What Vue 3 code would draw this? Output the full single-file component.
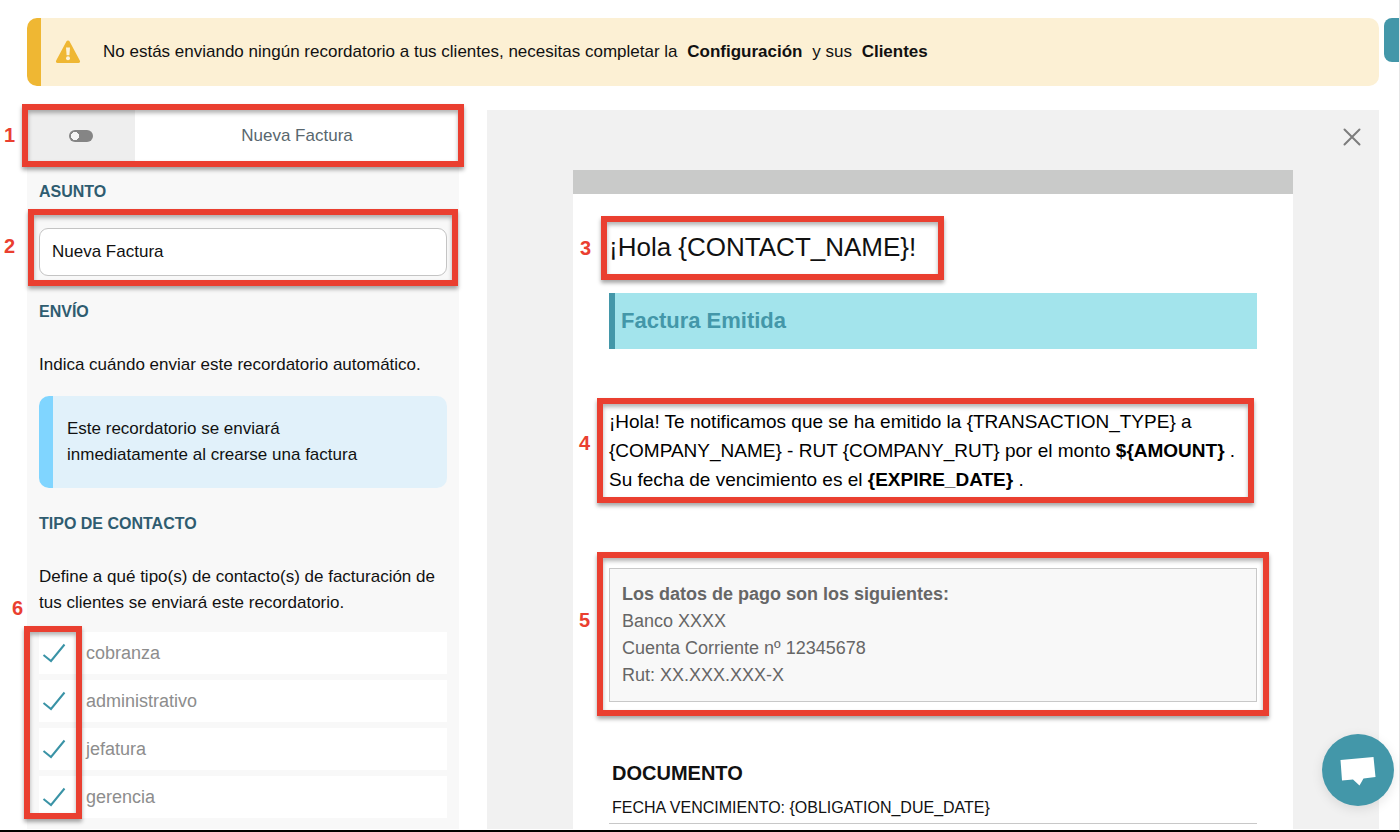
<script setup>
import { ref } from 'vue'

const subject = ref('Nueva Factura')
const enabled = ref(false)
const contacts = ref([
  { name: 'cobranza', checked: true },
  { name: 'administrativo', checked: true },
  { name: 'jefatura', checked: true },
  { name: 'gerencia', checked: true },
])
</script>

<template>
  <div class="page">
    <div class="alert" role="alert">
      <svg class="alert-icon" viewBox="0 0 26 24" aria-hidden="true">
        <path d="M11.500 1.300a1.700 1.700 0 0 1 3 0l10.300 19.300c.7 1.300 0 2.400-1.400 2.400H2.600c-1.400 0-2.100-1.100-1.400-2.400z" fill="#efb733" />
        <path d="M11 7.500h4l-.6 7.700h-2.800z" fill="#fdf3da" />
        <circle cx="13" cy="18.300" r="2" fill="#fdf3da" />
      </svg>
      <p>
        No estás enviando ningún recordatorio a tus clientes, necesitas completar la
        <a href="#configuracion">Configuración</a> y sus <a href="#clientes">Clientes</a>
      </p>
    </div>
    <button class="side-tab" type="button" aria-label="Abrir panel"></button>

    <div class="columns">
      <section class="settings">
        <header class="reminder">
          <label class="switch">
            <input v-model="enabled" type="checkbox" aria-label="Activar recordatorio" />
          </label>
          <span class="reminder-name">Nueva Factura</span>
          <span class="mark mark-header"><b>1</b></span>
        </header>

        <div class="fields">
          <h2><label for="subject">ASUNTO</label></h2>
          <div class="subject">
            <input id="subject" v-model="subject" type="text" />
            <span class="mark mark-subject"><b>2</b></span>
          </div>

          <h2>ENVÍO</h2>
          <p class="help">Indica cuándo enviar este recordatorio automático.</p>
          <div class="info">Este recordatorio se enviará<br />inmediatamente al crearse una factura</div>

          <h2>TIPO DE CONTACTO</h2>
          <p class="help">Define a qué tipo(s) de contacto(s) de facturación de tus clientes se enviará este recordatorio.</p>
          <div class="contacts">
            <label v-for="c in contacts" :key="c.name" class="contact">
              <input v-model="c.checked" type="checkbox" />
              <svg viewBox="0 0 24 20" aria-hidden="true">
                <path d="M1.500 12l7.500 6L22.500 1.500" fill="none" stroke="#3a93a6" stroke-width="2" />
              </svg>
              <span>{{ c.name }}</span>
            </label>
            <span class="mark mark-contacts"><b>6</b></span>
          </div>
        </div>
      </section>

      <section class="preview">
        <button class="close" type="button" aria-label="Cerrar">
          <svg viewBox="0 0 18 18" aria-hidden="true">
            <path d="M1.500 1.500l15 15M16.500 1.500l-15 15" stroke="#7d7d7d" stroke-width="2" stroke-linecap="round" />
          </svg>
        </button>
        <article class="mail">
          <h1>¡Hola {CONTACT_NAME}!<span class="mark mark-title"><b>3</b></span></h1>
          <div class="status">Factura Emitida</div>
          <div class="body">
            ¡Hola! Te notificamos que se ha emitido la {TRANSACTION_TYPE} a<br />
            {COMPANY_NAME} - RUT {COMPANY_RUT} por el monto <strong>${AMOUNT}</strong> .<br />
            Su fecha de vencimiento es el <strong>{EXPIRE_DATE}</strong> .
            <span class="mark mark-body"><b>4</b></span>
          </div>
          <div class="payment">
            <strong>Los datos de pago son los siguientes:</strong><br />
            Banco XXXX<br />
            Cuenta Corriente nº 12345678<br />
            Rut: XX.XXX.XXX-X
            <span class="mark mark-payment"><b>5</b></span>
          </div>
          <div class="document">
            <h3>DOCUMENTO</h3>
            <p>FECHA VENCIMIENTO: {OBLIGATION_DUE_DATE}</p>
          </div>
        </article>
      </section>
    </div>

    <button class="chat" type="button" aria-label="Abrir chat">
      <svg viewBox="0 0 36 32" aria-hidden="true">
        <path d="M.5 6L33.500 3l2 20-12 1.500L19.500 31.500 13 25.500 2 26.500z" fill="#fff" />
      </svg>
    </button>
  </div>
</template>

<style>
body {
  margin: 0;
  background: #fff;
}
</style>

<style scoped>
.page {
  position: relative;
  box-sizing: border-box;
  min-height: 100vh;
  padding: 18px 20px 1px 27px;
  border-right: 1px solid #e6e6e6;
  border-bottom: 2px solid #000;
  display: flex;
  flex-direction: column;
  gap: 24px;
  overflow: hidden;
  color: #111;
  font: 17px/26px "Liberation Sans", Arial, sans-serif;
}
h1, h2, h3, p {
  margin: 0;
}
button {
  padding: 0;
  border: 0;
  background: none;
  cursor: pointer;
}
svg {
  display: block;
}
.alert {
  display: flex;
  align-items: center;
  gap: 22px;
  min-height: 68px;
  padding-left: 14px;
  border-left: 14px solid #efb733;
  border-radius: 10px;
  background: #fcf0d4;
}
.alert-icon {
  width: 26px;
  height: 24px;
}
.alert a {
  margin: 0 5px;
  color: inherit;
  font-weight: bold;
  text-decoration: none;
}
.side-tab {
  position: absolute;
  top: 18px;
  right: -29px;
  width: 44px;
  height: 44px;
  border-radius: 8px;
  background: #4397a9;
}
.columns {
  flex: 1;
  display: grid;
  grid-template-columns: 432px 1fr;
  gap: 28px;
}
.settings {
  background: #f8f8f8;
}
.reminder {
  position: relative;
  display: grid;
  grid-template-columns: 1fr 3fr;
  height: 52px;
  background: #fff;
}
.switch {
  display: grid;
  place-items: center;
  background: #eee;
}
.switch input {
  appearance: none;
  box-sizing: border-box;
  width: 24px;
  height: 12px;
  margin: 0;
  border-radius: 6px;
  background: radial-gradient(circle at 6px 6px, #f4f4f4 4px, #858585 4px);
}
.switch input:checked {
  background: radial-gradient(circle at 18px 6px, #f4f4f4 4px, #3a93a6 4px);
}
.reminder-name {
  place-self: center;
  color: #59676e;
}
.fields {
  padding: 18px 12px 10px;
}
.fields h2 {
  margin-bottom: 28px;
  color: #2f5c70;
  font-size: 16px;
  line-height: 24px;
}
.fields h2:first-child {
  margin-bottom: 24px;
}
.subject {
  position: relative;
  margin-bottom: 24px;
}
.subject input {
  display: block;
  box-sizing: border-box;
  width: 100%;
  height: 48px;
  padding: 0 12px;
  border: 1px solid #c4c4c4;
  border-radius: 9px;
  background: #fff;
  color: #111;
  font: inherit;
}
.help {
  margin-bottom: 16px;
}
.info {
  margin: 18px 0 24px;
  padding: 20px 14px;
  border-left: 14px solid #80d5ff;
  border-radius: 10px;
  background: #e1f1fa;
}
.contacts {
  position: relative;
  display: grid;
  gap: 6px;
}
.contact {
  display: flex;
  align-items: center;
  height: 42px;
  padding-left: 3px;
  background: #fff;
  color: #8d8d8d;
  font-size: 18px;
}
.contact input {
  appearance: none;
  width: 0;
  height: 0;
  margin: 0;
}
.contact svg {
  width: 24px;
  height: 20px;
  margin-right: 20px;
  visibility: hidden;
}
.contact input:checked + svg {
  visibility: visible;
}
.preview {
  position: relative;
  padding: 60px 24px 0;
  background: #f1f1f1;
}
.close {
  position: absolute;
  top: 18px;
  right: 18px;
}
.close svg {
  width: 18px;
  height: 18px;
}
.mail {
  box-sizing: border-box;
  max-width: 720px;
  min-height: 100%;
  margin: 0 auto;
  padding: 36px 36px 0;
  border-top: 24px solid #c9cac9;
  background: #fff;
}
.mail h1 {
  position: relative;
  width: fit-content;
  margin-bottom: 29px;
  font-size: 26px;
  font-weight: normal;
  line-height: 34px;
}
.status {
  padding-left: 6px;
  border-left: 6px solid #4397a9;
  background: #a3e4ec;
  color: #4397a9;
  font-size: 22px;
  font-weight: bold;
  line-height: 56px;
}
.body {
  position: relative;
  margin: 58px 0 74px;
  color: #000;
  font-size: 19px;
  line-height: 29px;
}
.payment {
  position: relative;
  padding: 12px;
  border: 1px solid #c8c8c8;
  background: #f8f8f8;
  color: #666;
  font-size: 18px;
  line-height: 27px;
}
.document {
  margin-top: 58px;
  border-bottom: 1px solid #c8c8c8;
}
.document h3,
.document p {
  padding-left: 3px;
}
.document h3 {
  font-size: 20px;
}
.document p {
  padding-top: 7px;
  font-size: 16px;
  line-height: 30px;
}
.chat {
  position: fixed;
  right: 6px;
  bottom: 26px;
  display: grid;
  place-items: center;
  width: 72px;
  height: 72px;
  border-radius: 50%;
  background: #4397a9;
  box-shadow: 0 3px 12px rgba(0, 0, 0, 0.1);
}
.chat svg {
  width: 36px;
  height: 32px;
}

/* Numbered callout frames laid over the parts they explain */
.mark {
  position: absolute;
  border: 6px solid #ea3f30;
  box-shadow: 0 3px 4px rgba(0, 0, 0, 0.35), inset 0 3px 4px rgba(0, 0, 0, 0.3);
  pointer-events: none;
}
.mark b {
  position: absolute;
  left: -24px;
  color: #ea3f30;
  font-size: 20px;
  line-height: 24px;
}
.mark-header {
  inset: -6px -5px -5px;
}
.mark-header b {
  top: 13px;
}
.mark-subject {
  inset: -19px -11px -10px;
}
.mark-subject b {
  top: 19px;
  left: -30px;
}
.mark-title {
  inset: -14px -28px -16px -8px;
}
.mark-title b {
  top: 14px;
  left: -27px;
}
.mark-body {
  inset: -9px 3px -9px -12px;
}
.mark-body b {
  top: 27px;
}
.mark-payment {
  inset: -17px -13px -15px -13px;
}
.mark-payment b {
  top: 50px;
}
.mark-contacts {
  inset: -6px auto -1px -15px;
  width: 46px;
}
.mark-contacts b {
  top: -36px;
  left: -18px;
}
</style>
